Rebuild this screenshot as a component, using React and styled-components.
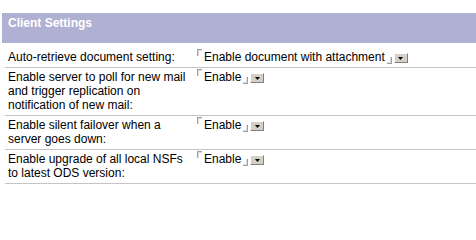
import React from "react";
import styled, { createGlobalStyle } from "styled-components";

const Global = createGlobalStyle`
  html, body { margin: 0; padding: 0; background: #ffffff; }
  body { font-family: "Liberation Sans", Arial, sans-serif; font-size: 12px; color: #000; }
`;

const Page = styled.div`
  width: 476px;
  padding-top: 13px;
  padding-left: 2px;
  box-sizing: border-box;
`;

const Header = styled.div`
  height: 30px;
  background: #b0b0d2;
  color: #ffffff;
  font-weight: bold;
  font-size: 12px;
  line-height: 14px;
  padding: 3px 0 0 6px;
  box-sizing: border-box;
`;

const Table = styled.div`
  margin-left: 3px;
  margin-top: 5px;
`;

const Row = styled.div`
  display: grid;
  grid-template-columns: 192px 1fr;
  padding: 2px 0 3px;
  border-bottom: 1px solid #c4c4c4;
  line-height: 14px;
`;

const Label = styled.div`
  padding: 0 7px 0 3px;
`;

const Value = styled.div`
  display: flex;
  align-items: flex-start;
`;

const OpenMark = styled.span`
  width: 4px;
  height: 6px;
  margin-top: -1px;
  margin-right: 2px;
  border-top: 1px solid #a0a0a0;
  border-left: 1px solid #a0a0a0;
  box-shadow: inset 1px 1px 0 #dcdcdc;
`;

const FieldText = styled.span`
  white-space: nowrap;
`;

const CloseMark = styled.span`
  width: 4px;
  height: 6px;
  margin: 7px 2px 0 2px;
  border-bottom: 1px solid #a0a0a0;
  border-right: 1px solid #a0a0a0;
  box-shadow: inset -1px -1px 0 #dcdcdc;
`;

const DropButton = styled.span`
  display: flex;
  align-items: center;
  justify-content: center;
  width: 14px;
  height: 10px;
  margin-top: 3px;
  box-sizing: border-box;
  background: #d4d0c8;
  border-top: 1px solid #ffffff;
  border-left: 1px solid #ffffff;
  border-right: 1px solid #808080;
  border-bottom: 1px solid #808080;
`;

const Arrow = () => (
  <svg width="5" height="3" viewBox="0 0 5 3">
    <polygon points="0,0 5,0 2.5,3" fill="#000" />
  </svg>
);

const rows = [
  { label: "Auto-retrieve document setting:", value: "Enable document with attachment" },
  {
    label: "Enable server to poll for new mail and trigger replication on notification of new mail:",
    value: "Enable",
  },
  { label: "Enable silent failover when a server goes down:", value: "Enable" },
  { label: "Enable upgrade of all local NSFs to latest ODS version:", value: "Enable" },
];

export default function App() {
  return (
    <Page>
      <Global />
      <Header>Client Settings</Header>
      <Table>
        {rows.map((r) => (
          <Row key={r.label}>
            <Label>{r.label}</Label>
            <Value>
              <OpenMark />
              <FieldText>{r.value}</FieldText>
              <CloseMark />
              <DropButton>
                <Arrow />
              </DropButton>
            </Value>
          </Row>
        ))}
      </Table>
    </Page>
  );
}
